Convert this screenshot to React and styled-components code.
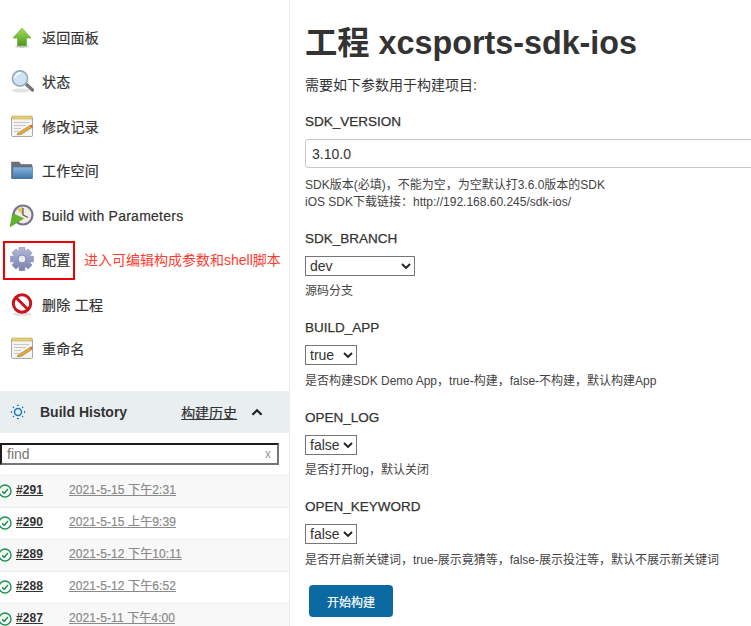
import React from 'react';
import styled, { createGlobalStyle } from 'styled-components';

const GlobalStyle = createGlobalStyle`
  html, body {
    margin: 0;
    padding: 0;
    height: 100%;
    overflow: hidden;
    background: #fff;
  }
  body {
    font-family: "Liberation Sans", "Noto Sans CJK SC", sans-serif;
    color: #333;
  }
`;

const ArrowIcon = () => (
  <svg width="24" height="24" viewBox="0 0 24 24">
    <defs>
      <linearGradient id="arrowG" x1="0" y1="0" x2="0" y2="1">
        <stop offset="0" stopColor="#a5dc5c" />
        <stop offset="1" stopColor="#4b9a1a" />
      </linearGradient>
    </defs>
    <ellipse cx="12" cy="21.5" rx="7" ry="1.4" fill="#ccc" />
    <path d="M12 3 L21 13 H16.5 V20.8 H7.5 V13 H3 Z" fill="url(#arrowG)" stroke="#5a9a2a" strokeWidth=".5" />
  </svg>
);

const SearchIcon = () => (
  <svg width="24" height="24" viewBox="0 0 24 24">
    <ellipse cx="11" cy="21.5" rx="9" ry="2" fill="#e2e2e2" />
    <path d="M16 15 L22.5 21" stroke="#777" strokeWidth="3.4" strokeLinecap="round" />
    <circle cx="10" cy="9.5" r="7.6" fill="#cfe2f5" stroke="#9aa9b8" strokeWidth="1.6" />
    <path d="M5 9 A5.5 5.5 0 0 1 11 4.2" fill="none" stroke="#fff" strokeWidth="1.6" />
  </svg>
);

const NotepadIcon = () => (
  <svg width="24" height="24" viewBox="0 0 24 24">
    <rect x="1.5" y="3" width="21" height="19.5" rx="1" fill="#f4f4f0" stroke="#a8a8a8" />
    <rect x="2" y="2" width="20" height="3" fill="#e6cf7a" stroke="#b59d4a" strokeWidth=".5" />
    <path d="M4 8.5H19M4 11.5H16M4 14.5H11M4 17.5H9" stroke="#c8c8c8" strokeWidth="1" />
    <path d="M8 19 L20 11.5 L22 13.5 L11 20.5 L7 20.8 Z" fill="#e8a93c" stroke="#8a6a22" strokeWidth=".5" />
    <path d="M20 11.5 L22 13.5 L23 12.2 L21.2 10.4 Z" fill="#e04a3a" />
  </svg>
);

const FolderIcon = () => (
  <svg width="24" height="24" viewBox="0 0 24 24">
    <defs>
      <linearGradient id="folderG" x1="0" y1="0" x2="0" y2="1">
        <stop offset="0" stopColor="#8db3dc" />
        <stop offset="1" stopColor="#3f75ae" />
      </linearGradient>
    </defs>
    <path d="M1.5 4 H9 L11 6.5 H22 V20.5 H1.5 Z" fill="#6c7177" stroke="#56595d" strokeWidth=".5" />
    <path d="M3 9 H22.5 V20.5 H2.5 Z" fill="url(#folderG)" stroke="#3f6c9c" strokeWidth=".5" />
  </svg>
);

const ClockIcon = () => (
  <svg width="24" height="24" viewBox="0 0 24 24">
    <circle cx="13" cy="12" r="10.6" fill="#77738f" />
    <circle cx="13" cy="12" r="8.4" fill="#efece2" />
    <path d="M13 12 L13 4 A8 8 0 0 0 7 6.6 Z" fill="#e2c768" />
    <path d="M13 12 L13 5M13 12 L18 14.5" stroke="#555" strokeWidth="1.2" />
    <path d="M2.6 10.5 L13.5 15.5 L0 24 Z" fill="#62b32d" stroke="#4a8c20" strokeWidth=".5" />
  </svg>
);

// eight teeth round the centre
const gearPath = () => {
  const pts = [];
  for (let i = 0; i < 8; i++) {
    const a = (i * Math.PI) / 4;
    [[-0.38, 8.2], [-0.24, 11.8], [0.24, 11.8], [0.38, 8.2]].forEach(([da, r]) => {
      pts.push(`${(12 + r * Math.sin(a + da)).toFixed(2)} ${(12 - r * Math.cos(a + da)).toFixed(2)}`);
    });
  }
  return `M${pts.join('L')}Z`;
};

const GearIcon = () => (
  <svg width="24" height="24" viewBox="0 0 24 24">
    <defs>
      <linearGradient id="gearG" x1="0" y1="0" x2="0" y2="1">
        <stop offset="0" stopColor="#b4b9d6" />
        <stop offset="1" stopColor="#7a81b0" />
      </linearGradient>
    </defs>
    <path d={gearPath()} fill="url(#gearG)" stroke="#7077a3" strokeWidth=".5" />
    <circle cx="12" cy="12" r="4" fill="#e9e9ee" stroke="#7077a8" strokeWidth=".8" />
  </svg>
);

const NoEntryIcon = () => (
  <svg width="24" height="24" viewBox="0 0 24 24">
    <ellipse cx="12" cy="22" rx="9" ry="1.8" fill="#ddd" />
    <circle cx="12" cy="11.5" r="8.7" fill="#fff" stroke="#c9151c" strokeWidth="3" />
    <path d="M5.8 5.3 L18.2 17.7" stroke="#c9151c" strokeWidth="3" />
  </svg>
);

const HistoryIcon = () => (
  <svg width="16" height="16" viewBox="0 0 16 16" fill="#1f78b4">
    <circle cx="8" cy="8" r="3.5" fill="none" stroke="#1f78b4" strokeWidth="1.5" />
    <path d="M6.5 2 L8 .4 L9.5 2 Z M6.5 14 L8 15.6 L9.5 14 Z M2 6.5 L.4 8 L2 9.5 Z M14 6.5 L15.6 8 L14 9.5 Z" />
    <circle cx="3.4" cy="3.4" r=".8" />
    <circle cx="12.6" cy="3.4" r=".8" />
    <circle cx="3.4" cy="12.6" r=".8" />
    <circle cx="12.6" cy="12.6" r=".8" />
  </svg>
);

const CheckIcon = () => (
  <svg width="14" height="14" viewBox="0 0 14 14" fill="none" stroke="#1e9350">
    <circle cx="7" cy="7" r="6" strokeWidth="1.4" />
    <path d="M4 7.2 L6.2 9.3 L10 5" strokeWidth="1.5" />
  </svg>
);

const Chevron = ({ className }) => (
  <svg className={className} width="10" height="7" viewBox="0 0 10 7" fill="none" stroke="#222" strokeWidth="1.9">
    <path d="M1 1 L5 5 L9 1" />
  </svg>
);

const Page = styled.div`
  display: flex;
  width: 751px;
  height: 626px;
  overflow: hidden;
`;

const Sidebar = styled.aside`
  flex: 0 0 290px;
  box-sizing: border-box;
  border-right: 1px solid #e9eef1;
  padding-top: 14.5px;
`;

const Tasks = styled.nav`
  display: flex;
  flex-direction: column;
`;

const Task = styled.div`
  position: relative;
  display: flex;
  align-items: center;
  gap: 8px;
  height: 44.5px;
  padding-left: 10px;
  font-size: 14px;
  letter-spacing: 0.25px;
  color: #333;
  -webkit-text-stroke: 0.2px #333;

  ${({ $marked }) => $marked && `
    &::after {
      content: "";
      position: absolute;
      left: 3px;
      top: 4px;
      width: 72px;
      height: 39px;
      box-sizing: border-box;
      border: 2px solid #f00000;
    }
  `}
`;

const TaskLabel = styled.span`
  margin-top: ${({ $latin }) => ($latin ? 2 : 0)}px;
`;

const Note = styled.span`
  position: absolute;
  left: 84px;
  top: 14px;
  font-size: 14px;
  line-height: 18px;
  letter-spacing: 0;
  color: #ff3b30;
  -webkit-text-stroke: 0;
`;

const HistoryHead = styled.div`
  display: flex;
  align-items: center;
  height: 42px;
  margin-top: 20.5px;
  padding-left: 10px;
  background: #e9eef1;
  font-size: 14px;
`;

const HistoryTitle = styled.strong`
  margin-left: 14px;
  color: #333;
`;

const HistoryLink = styled.a`
  margin-left: 54px;
  color: #333;
  text-decoration: underline;
  -webkit-text-stroke: 0.2px #333;
`;

const Collapse = styled(Chevron)`
  margin-left: 14px;
  width: 12px;
  height: 8px;
  transform: rotate(180deg);
`;

const SearchBox = styled.div`
  display: flex;
  align-items: center;
  justify-content: space-between;
  box-sizing: border-box;
  width: 279px;
  height: 22px;
  margin: 10px 0;
  padding: 0 6px 0 5px;
  border: 2px solid;
  border-color: #1d1d1d #767676 #767676 #1d1d1d;
  font-size: 14px;
  color: #757575;
`;

const Clear = styled.span`
  font-size: 12px;
  color: #999;
`;

const BuildRow = styled.div`
  display: flex;
  align-items: center;
  height: 32px;
  box-sizing: border-box;
  border-top: 1px solid #ececec;
  background: ${({ $odd }) => ($odd ? '#f8f8f8' : '#fff')};
  font-size: 12px;
`;

const BuildCheck = styled.span`
  display: flex;
  margin: 0 0 2px -2px;
`;

const BuildNumber = styled.a`
  width: 53px;
  margin: 0 0 4px 4px;
  font-weight: 700;
  letter-spacing: 0.1px;
  color: #333;
  text-decoration: underline;
`;

const BuildDate = styled.a`
  margin-bottom: 7px;
  letter-spacing: 0.1px;
  color: #8a8a8a;
  text-decoration: underline;
  -webkit-text-stroke: 0.2px #8a8a8a;
`;

const Main = styled.main`
  flex: 1;
  min-width: 0;
  padding-left: 15px;
`;

const Title = styled.h1`
  margin: 23px 0 0;
  font-size: 32.3px;
  line-height: 40px;
  font-weight: 700;
  color: #333;
`;

const Intro = styled.p`
  margin: 13px 0 0;
  font-size: 14px;
  line-height: 18px;
`;

const Params = styled.form`
  display: flex;
  flex-direction: column;
`;

const Param = styled.div`
  margin-top: ${({ $top }) => $top}px;
`;

const ParamName = styled.div`
  margin-top: 1px;
  font-size: 13.5px;
  line-height: 18px;
  color: #333;
  -webkit-text-stroke: 0.25px #333;
`;

const TextField = styled.input`
  display: block;
  box-sizing: border-box;
  width: 480px;
  height: 29px;
  margin-top: 8px;
  padding: 0 6px;
  border: 1px solid #c8c8c8;
  border-radius: 3px;
  font: 14px "Liberation Sans", sans-serif;
  color: #333;
`;

const SelectWrap = styled.div`
  position: relative;
  width: ${({ $width }) => $width}px;
  height: 20px;
  margin-top: 8px;
`;

const Select = styled.select`
  appearance: none;
  display: block;
  box-sizing: border-box;
  width: 100%;
  height: 100%;
  padding: 0 0 0 4px;
  border: 1px solid #767676;
  border-radius: 0;
  background: #fff;
  font: 14px "Liberation Sans", sans-serif;
  color: #333;
`;

const SelectArrow = styled(Chevron)`
  position: absolute;
  right: 4px;
  top: 7px;
  pointer-events: none;
`;

const Help = styled.div`
  margin-top: ${({ $gap }) => $gap}px;
  font-size: 12px;
  line-height: 17px;
  color: #444;
`;

const SubmitButton = styled.button`
  width: 84px;
  height: 32px;
  margin: 16px 0 0 4px;
  border: 0;
  border-radius: 4px;
  background: #0b6aa2;
  color: #fff;
  font: 12px "Liberation Sans", "Noto Sans CJK SC", sans-serif;
  -webkit-text-stroke: 0.2px #fff;
`;

const tasks = [
  { icon: <ArrowIcon />, label: '返回面板' },
  { icon: <SearchIcon />, label: '状态' },
  { icon: <NotepadIcon />, label: '修改记录' },
  { icon: <FolderIcon />, label: '工作空间' },
  { icon: <ClockIcon />, label: 'Build with Parameters', latin: true },
  { icon: <GearIcon />, label: '配置', marked: true },
  { icon: <NoEntryIcon />, label: '删除 工程' },
  { icon: <NotepadIcon />, label: '重命名' },
];

const builds = [
  ['#291', '2021-5-15 下午2:31'],
  ['#290', '2021-5-15 上午9:39'],
  ['#289', '2021-5-12 下午10:11'],
  ['#288', '2021-5-12 下午6:52'],
  ['#287', '2021-5-11 下午4:00'],
];

const Dropdown = ({ width, value }) => (
  <SelectWrap $width={width}>
    <Select defaultValue={value}>
      <option>{value}</option>
    </Select>
    <SelectArrow />
  </SelectWrap>
);

export default function App() {
  return (
    <Page>
      <GlobalStyle />
      <Sidebar>
        <Tasks>
          {tasks.map((t) => (
            <Task key={t.label} $marked={t.marked}>
              {t.icon}
              <TaskLabel $latin={t.latin}>{t.label}</TaskLabel>
              {t.marked && <Note>进入可编辑构成参数和shell脚本</Note>}
            </Task>
          ))}
        </Tasks>
        <HistoryHead>
          <HistoryIcon />
          <HistoryTitle>Build History</HistoryTitle>
          <HistoryLink>构建历史</HistoryLink>
          <Collapse />
        </HistoryHead>
        <SearchBox>
          find
          <Clear>x</Clear>
        </SearchBox>
        {builds.map(([num, date], i) => (
          <BuildRow key={num} $odd={i % 2 === 0}>
            <BuildCheck>
              <CheckIcon />
            </BuildCheck>
            <BuildNumber>{num}</BuildNumber>
            <BuildDate>{date}</BuildDate>
          </BuildRow>
        ))}
      </Sidebar>
      <Main>
        <Title>工程 xcsports-sdk-ios</Title>
        <Intro>需要如下参数用于构建项目:</Intro>
        <Params>
          <Param $top={18}>
            <ParamName>SDK_VERSION</ParamName>
            <TextField defaultValue="3.10.0" />
            <Help $gap={9}>
              SDK版本(必填)，不能为空，为空默认打3.6.0版本的SDK
              <br />
              iOS SDK下载链接：http://192.168.60.245/sdk-ios/
            </Help>
          </Param>
          <Param $top={18}>
            <ParamName>SDK_BRANCH</ParamName>
            <Dropdown width={110} value="dev" />
            <Help $gap={7}>源码分支</Help>
          </Param>
          <Param $top={18}>
            <ParamName>BUILD_APP</ParamName>
            <Dropdown width={52} value="true" />
            <Help $gap={8}>是否构建SDK Demo App，true-构建，false-不构建，默认构建App</Help>
          </Param>
          <Param $top={18}>
            <ParamName>OPEN_LOG</ParamName>
            <Dropdown width={52} value="false" />
            <Help $gap={7}>是否打开log，默认关闭</Help>
          </Param>
          <Param $top={18}>
            <ParamName>OPEN_KEYWORD</ParamName>
            <Dropdown width={52} value="false" />
            <Help $gap={8}>是否开启新关键词，true-展示竟猜等，false-展示投注等，默认不展示新关键词</Help>
          </Param>
          <div>
            <SubmitButton type="button">开始构建</SubmitButton>
          </div>
        </Params>
      </Main>
    </Page>
  );
}
